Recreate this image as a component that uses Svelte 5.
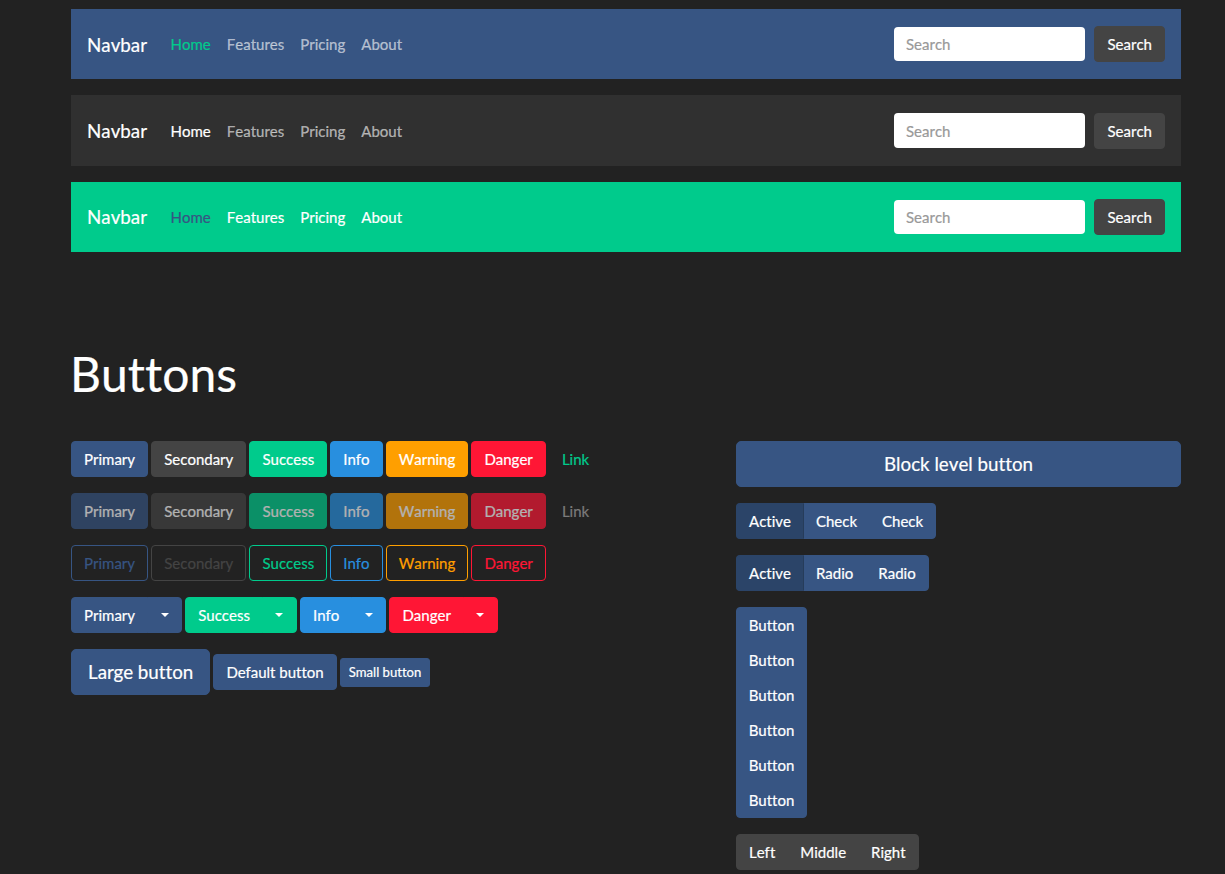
<script>
  const navbars = [
    { tone: 'primary' },
    { tone: 'dark' },
    { tone: 'success' }
  ];
  const links = ['Features', 'Pricing', 'About'];
  const solid = [
    ['primary', 'Primary'],
    ['secondary', 'Secondary'],
    ['success', 'Success'],
    ['info', 'Info'],
    ['warning', 'Warning'],
    ['danger', 'Danger']
  ];
  const splits = [
    ['primary', 'Primary'],
    ['success', 'Success'],
    ['info', 'Info'],
    ['danger', 'Danger']
  ];
</script>

<div class="container">
  {#each navbars as bar}
    <nav class="navbar {bar.tone}">
      <a class="brand" href="#top">Navbar</a>
      <ul class="nav-links">
        <li><a class="nav-link active" href="#top">Home</a></li>
        {#each links as link}
          <li><a class="nav-link" href="#top">{link}</a></li>
        {/each}
      </ul>
      <form class="search">
        <input type="text" placeholder="Search" />
        <button type="button" class="btn secondary">Search</button>
      </form>
    </nav>
  {/each}

  <h1>Buttons</h1>

  <div class="columns">
    <div class="left">
      <div class="row">
        {#each solid as [tone, label]}
          <button type="button" class="btn {tone}">{label}</button>
        {/each}
        <button type="button" class="btn link">Link</button>
      </div>
      <div class="row">
        {#each solid as [tone, label]}
          <button type="button" class="btn {tone} disabled">{label}</button>
        {/each}
        <button type="button" class="btn link muted">Link</button>
      </div>
      <div class="row">
        {#each solid as [tone, label]}
          <button type="button" class="btn outline-{tone}">{label}</button>
        {/each}
      </div>
      <div class="row">
        {#each splits as [tone, label]}
          <div class="split">
            <button type="button" class="btn {tone}">{label}</button>
            <button type="button" class="btn {tone} toggle" aria-label="Toggle"><span class="caret"></span></button>
          </div>
        {/each}
      </div>
      <div class="row sizes">
        <button type="button" class="btn primary lg">Large button</button>
        <button type="button" class="btn primary">Default button</button>
        <button type="button" class="btn primary sm">Small button</button>
      </div>
    </div>

    <div class="right">
      <button type="button" class="btn primary lg block">Block level button</button>
      <div class="group">
        <button type="button" class="btn primary pressed">Active</button>
        <button type="button" class="btn primary">Check</button>
        <button type="button" class="btn primary">Check</button>
      </div>
      <div class="group">
        <button type="button" class="btn primary pressed">Active</button>
        <button type="button" class="btn primary">Radio</button>
        <button type="button" class="btn primary">Radio</button>
      </div>
      <div class="group vertical">
        {#each Array(6) as _}
          <button type="button" class="btn primary">Button</button>
        {/each}
      </div>
      <div class="group">
        <button type="button" class="btn secondary">Left</button>
        <button type="button" class="btn secondary">Middle</button>
        <button type="button" class="btn secondary">Right</button>
      </div>
    </div>
  </div>
</div>

<style>
  :global(body) {
    margin: 0;
    background: #222;
    color: #fff;
    font-family: Lato, "Liberation Sans", sans-serif;
    font-size: 15px;
    font-kerning: none;
    font-variant-ligatures: none;
    -webkit-text-stroke: 0.2px;
  }
  .container {
    width: 1110px;
    margin-left: 71px;
    padding-top: 9.1px;
  }
  .navbar {
    display: flex;
    align-items: center;
    height: 70.33px;
    padding: 0 16px;
    margin-bottom: 16px;
    box-sizing: border-box;
  }
  .navbar.primary { background: #375583; }
  .navbar.dark { background: #303030; }
  .navbar.success { background: #00cb8c; }
  .brand {
    font-size: 18.75px;
    color: #fff;
    text-decoration: none;
    margin-right: 15.6px;
    padding-bottom: 0.5px;
  }
  .nav-links {
    display: flex;
    list-style: none;
    margin: 0;
    padding: 0;
  }
  .nav-link {
    display: block;
    padding: 8px;
    color: rgba(255, 255, 255, 0.6);
    text-decoration: none;
    line-height: 22px;
  }
  .primary .nav-link.active { color: #00cb8c; }
  .dark .nav-link.active { color: #fff; }
  .success .nav-link { color: #fff; }
  .success .nav-link.active { color: #375583; }
  .search {
    display: flex;
    align-items: center;
    gap: 9px;
    margin-left: auto;
  }
  .search input {
    width: 191px;
    height: 34.4px;
    box-sizing: border-box;
    border: 0;
    border-radius: 4px;
    padding: 6px 11.5px;
    font: inherit;
    background: #fff;
    color: #444;
  }
  .search input::placeholder {
    color: #999;
    opacity: 1;
  }
  h1 {
    font-size: 48px;
    font-weight: 400;
    line-height: 58px;
    margin: 93px 0 38px -1px;
  }
  .columns {
    display: flex;
    justify-content: space-between;
    align-items: flex-start;
  }
  .left { width: 635px; }
  .right {
    width: 445px;
    display: flex;
    flex-direction: column;
    align-items: flex-start;
    gap: 16px;
  }
  .row {
    display: flex;
    gap: 3.1px;
    margin-bottom: 16px;
  }
  .sizes {
    align-items: center;
    font-kerning: normal;
  }
  .btn {
    box-sizing: border-box;
    height: 36px;
    padding: 6px 12px;
    border: 1px solid transparent;
    border-radius: 4px;
    font: inherit;
    font-kerning: inherit;
    font-variant-ligatures: inherit;
    line-height: 22px;
    color: #fff;
    background: transparent;
    white-space: nowrap;
  }
  .btn.primary { background: #375583; border-color: #375583; }
  .btn.secondary { background: #444; border-color: #444; }
  .btn.success { background: #00cb8c; border-color: #00cb8c; }
  .btn.info { background: #288fdf; border-color: #288fdf; }
  .btn.warning { background: #ff9f00; border-color: #ff9f00; }
  .btn.danger { background: #ff1635; border-color: #ff1635; }
  .btn.disabled { opacity: 0.65; }
  .btn.link { color: #00cb8c; }
  .btn.link.muted { color: #7b7b7b; }
  .btn.outline-primary { border-color: #375583; color: #375583; }
  .btn.outline-secondary { border-color: #444; color: #444; }
  .btn.outline-success { border-color: #00cb8c; color: #00cb8c; }
  .btn.outline-info { border-color: #288fdf; color: #288fdf; }
  .btn.outline-warning { border-color: #ff9f00; color: #ff9f00; }
  .btn.outline-danger { border-color: #ff1635; color: #ff1635; }
  .btn.lg {
    height: 46px;
    padding: 8px 16px;
    font-size: 18.75px;
    line-height: 28px;
    border-radius: 5px;
  }
  .btn.sm {
    height: 29px;
    padding: 4px 8px;
    font-size: 13.125px;
    line-height: 19px;
    border-radius: 3px;
  }
  .btn.block { width: 100%; }
  .split { display: inline-flex; }
  .split .btn:first-child {
    border-top-right-radius: 0;
    border-bottom-right-radius: 0;
  }
  .toggle {
    display: flex;
    align-items: center;
    justify-content: center;
    width: 35px;
    margin-left: -1px;
    padding: 0;
    border-top-left-radius: 0;
    border-bottom-left-radius: 0;
  }
  .caret {
    width: 0;
    height: 0;
    border-top: 4.5px solid #fff;
    border-left: 4.5px solid transparent;
    border-right: 4.5px solid transparent;
  }
  .group { display: inline-flex; }
  .group .btn { border-radius: 0; margin-left: -1px; }
  .group .btn:first-child {
    margin-left: 0;
    border-top-left-radius: 4px;
    border-bottom-left-radius: 4px;
  }
  .group .btn:last-child {
    border-top-right-radius: 4px;
    border-bottom-right-radius: 4px;
  }
  .group .btn.pressed {
    background: #2b4468;
    border-color: #2b4468 #263c5a #2b4468 #2b4468;
    position: relative;
  }
  .group.vertical {
    flex-direction: column;
    width: 71px;
  }
  .group.vertical .btn {
    margin-left: 0;
    margin-top: -1px;
    padding-inline: 0;
    border-radius: 0;
  }
  .group.vertical .btn:first-child {
    margin-top: 0;
    border-radius: 4px 4px 0 0;
  }
  .group.vertical .btn:last-child { border-radius: 0 0 4px 4px; }
</style>
